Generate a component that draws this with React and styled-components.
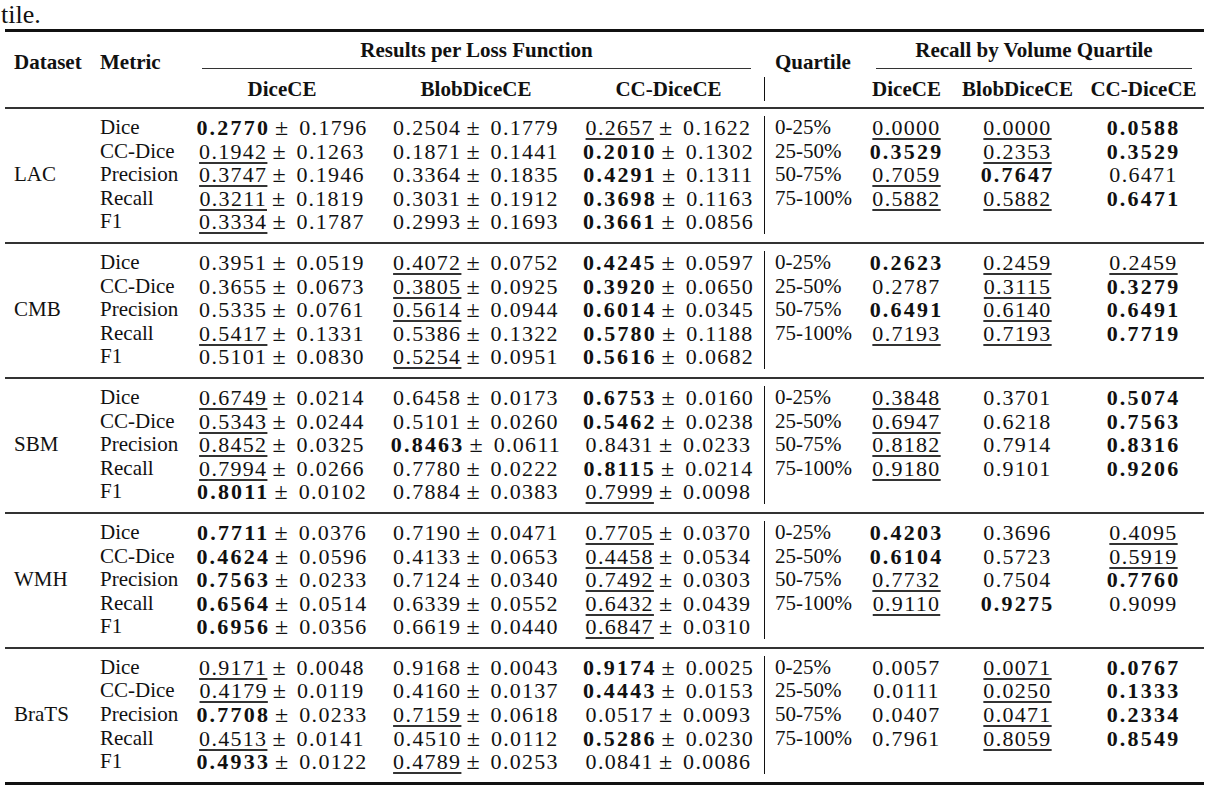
import React from "react";
import styled, { createGlobalStyle, css } from "styled-components";

const GlobalStyle = createGlobalStyle`
  html, body {
    margin: 0;
    padding: 0;
    background: #ffffff;
  }
  body {
    font-family: "Liberation Serif", "Times New Roman", serif;
    color: #111;
  }
`;

const COLS = "86px 94px 194px 194px 192px 96px 91px 131px 121px";

const DATA = [
  {
    name: "LAC",
    rows: [
      ["Dice", "b0.2770 0.1796", "0.2504 0.1779", "u0.2657 0.1622", "0-25%", "u0.0000", "u0.0000", "b0.0588"],
      ["CC-Dice", "u0.1942 0.1263", "0.1871 0.1441", "b0.2010 0.1302", "25-50%", "b0.3529", "u0.2353", "b0.3529"],
      ["Precision", "u0.3747 0.1946", "0.3364 0.1835", "b0.4291 0.1311", "50-75%", "u0.7059", "b0.7647", "0.6471"],
      ["Recall", "u0.3211 0.1819", "0.3031 0.1912", "b0.3698 0.1163", "75-100%", "u0.5882", "u0.5882", "b0.6471"],
      ["F1", "u0.3334 0.1787", "0.2993 0.1693", "b0.3661 0.0856", "", "", "", ""],
    ],
  },
  {
    name: "CMB",
    rows: [
      ["Dice", "0.3951 0.0519", "u0.4072 0.0752", "b0.4245 0.0597", "0-25%", "b0.2623", "u0.2459", "u0.2459"],
      ["CC-Dice", "0.3655 0.0673", "u0.3805 0.0925", "b0.3920 0.0650", "25-50%", "0.2787", "u0.3115", "b0.3279"],
      ["Precision", "0.5335 0.0761", "u0.5614 0.0944", "b0.6014 0.0345", "50-75%", "b0.6491", "u0.6140", "b0.6491"],
      ["Recall", "u0.5417 0.1331", "0.5386 0.1322", "b0.5780 0.1188", "75-100%", "u0.7193", "u0.7193", "b0.7719"],
      ["F1", "0.5101 0.0830", "u0.5254 0.0951", "b0.5616 0.0682", "", "", "", ""],
    ],
  },
  {
    name: "SBM",
    rows: [
      ["Dice", "u0.6749 0.0214", "0.6458 0.0173", "b0.6753 0.0160", "0-25%", "u0.3848", "0.3701", "b0.5074"],
      ["CC-Dice", "u0.5343 0.0244", "0.5101 0.0260", "b0.5462 0.0238", "25-50%", "u0.6947", "0.6218", "b0.7563"],
      ["Precision", "u0.8452 0.0325", "b0.8463 0.0611", "0.8431 0.0233", "50-75%", "u0.8182", "0.7914", "b0.8316"],
      ["Recall", "u0.7994 0.0266", "0.7780 0.0222", "b0.8115 0.0214", "75-100%", "u0.9180", "0.9101", "b0.9206"],
      ["F1", "b0.8011 0.0102", "0.7884 0.0383", "u0.7999 0.0098", "", "", "", ""],
    ],
  },
  {
    name: "WMH",
    rows: [
      ["Dice", "b0.7711 0.0376", "0.7190 0.0471", "u0.7705 0.0370", "0-25%", "b0.4203", "0.3696", "u0.4095"],
      ["CC-Dice", "b0.4624 0.0596", "0.4133 0.0653", "u0.4458 0.0534", "25-50%", "b0.6104", "0.5723", "u0.5919"],
      ["Precision", "b0.7563 0.0233", "0.7124 0.0340", "u0.7492 0.0303", "50-75%", "u0.7732", "0.7504", "b0.7760"],
      ["Recall", "b0.6564 0.0514", "0.6339 0.0552", "u0.6432 0.0439", "75-100%", "u0.9110", "b0.9275", "0.9099"],
      ["F1", "b0.6956 0.0356", "0.6619 0.0440", "u0.6847 0.0310", "", "", "", ""],
    ],
  },
  {
    name: "BraTS",
    rows: [
      ["Dice", "u0.9171 0.0048", "0.9168 0.0043", "b0.9174 0.0025", "0-25%", "0.0057", "u0.0071", "b0.0767"],
      ["CC-Dice", "u0.4179 0.0119", "0.4160 0.0137", "b0.4443 0.0153", "25-50%", "0.0111", "u0.0250", "b0.1333"],
      ["Precision", "b0.7708 0.0233", "u0.7159 0.0618", "0.0517 0.0093", "50-75%", "0.0407", "u0.0471", "b0.2334"],
      ["Recall", "u0.4513 0.0141", "0.4510 0.0112", "b0.5286 0.0230", "75-100%", "0.7961", "u0.8059", "b0.8549"],
      ["F1", "b0.4933 0.0122", "u0.4789 0.0253", "0.0841 0.0086", "", "", "", ""],
    ],
  },
];

// "b0.1234" -> bold, "u0.1234" -> underlined
const parse = (s) => {
  const flag = s[0];
  if (flag === "b" || flag === "u") {
    return { text: s.slice(1), bold: flag === "b", under: flag === "u" };
  }
  return { text: s, bold: false, under: false };
};

const App = () => {
  return (
    <>
      <GlobalStyle />
      <Page>
        <Caption>tile.</Caption>
        <Table>
          <Head>
            <StubHead>Dataset</StubHead>
            <StubHead>Metric</StubHead>
            <GroupHead $col="3 / span 3" $inset="0 14px 0 17px">
              Results per Loss Function
            </GroupHead>
            <StubHead $pad="10px">Quartile</StubHead>
            <GroupHead $col="7 / span 3" $inset="0 12px 0 15px">
              Recall by Volume Quartile
            </GroupHead>
            <SubHead $col={3}>DiceCE</SubHead>
            <SubHead $col={4}>BlobDiceCE</SubHead>
            <SubHead $col={5} $bar>
              CC-DiceCE
            </SubHead>
            <SubHead $col={7}>DiceCE</SubHead>
            <SubHead $col={8}>BlobDiceCE</SubHead>
            <SubHead $col={9}>CC-DiceCE</SubHead>
          </Head>

          {DATA.map((block) => (
            <Block key={block.name}>
              <DatasetCell>{block.name}</DatasetCell>
              {block.rows.map((row) => (
                <React.Fragment key={row[0]}>
                  <MetricCell>{row[0]}</MetricCell>
                  <Value v={row[1]} />
                  <Value v={row[2]} />
                  <Value v={row[3]} bar />
                  <QuartCell>{row[4]}</QuartCell>
                  <Recall v={row[5]} />
                  <Recall v={row[6]} />
                  <Recall v={row[7]} />
                </React.Fragment>
              ))}
            </Block>
          ))}
        </Table>
      </Page>
    </>
  );
};

const Value = ({ v, bar }) => {
  const [m, s] = v.split(" ");
  const mean = parse(m);
  return (
    <ValueCell $bar={bar}>
      <Num $bold={mean.bold} $under={mean.under}>
        {mean.text}
      </Num>
      <Pm>±</Pm>
      <Num>{s}</Num>
    </ValueCell>
  );
};

const Recall = ({ v }) => {
  if (!v) return <RecallCell />;
  const r = parse(v);
  return (
    <RecallCell>
      <Num $bold={r.bold} $under={r.under}>
        {r.text}
      </Num>
    </RecallCell>
  );
};

export default App;

const Page = styled.div`
  width: 1210px;
  min-height: 809px;
  background: #fff;
`;

const Caption = styled.div`
  font-size: 26px;
  line-height: 29px;
  height: 29px;
  padding-left: 1px;
  color: #111;
`;

const Table = styled.div`
  width: 1199px;
  margin-left: 5px;
  border-top: 3px solid #111;
  border-bottom: 3px solid #111;
`;

const Head = styled.div`
  display: grid;
  grid-template-columns: ${COLS};
  grid-template-rows: 37px 38px;
  border-bottom: 2px solid #333;
  font-weight: 700;
  font-size: 21px;
  line-height: 24px;
  white-space: nowrap;
`;

const StubHead = styled.div`
  grid-row: 1 / span 2;
  align-self: start;
  padding-top: 18px;
  padding-left: ${(p) => p.$pad || "9px"};
`;

const GroupHead = styled.div`
  grid-row: 1;
  grid-column: ${(p) => p.$col};
  margin: ${(p) => p.$inset};
  padding-top: 6px;
  text-align: center;
  border-bottom: 1px solid #333;
`;

const SubHead = styled.div`
  grid-row: 2;
  grid-column: ${(p) => p.$col};
  align-self: start;
  margin-top: 8px;
  height: 24px;
  text-align: center;
  border-right: ${(p) => (p.$bar ? "1px solid #111" : "none")};
`;

const Block = styled.div`
  display: grid;
  grid-template-columns: ${COLS};
  grid-auto-rows: 23.6px;
  padding: 7px 0 8px;
  font-size: 21px;
  line-height: 23.6px;
  white-space: nowrap;

  & + & {
    border-top: 2px solid #333;
  }
`;

const DatasetCell = styled.div`
  grid-row: 1 / span 5;
  grid-column: 1;
  align-self: center;
  padding-left: 9px;
`;

const MetricCell = styled.div`
  grid-column: 2;
  padding-left: 9px;
`;

const ValueCell = styled.div`
  font-size: 22px;
  text-align: center;
  border-right: ${(p) => (p.$bar ? "1px solid #111" : "none")};
`;

const QuartCell = styled.div`
  padding-left: 10px;
`;

const RecallCell = styled.div`
  font-size: 22px;
  text-align: center;
`;

const Num = styled.span`
  font-family: "Liberation Serif", "Times New Roman", serif;
  font-size: 22px;
  font-weight: ${(p) => (p.$bold ? 700 : 400)};
  letter-spacing: ${(p) => (p.$bold ? "2.2px" : "1.3px")};
  ${(p) =>
    p.$under &&
    css`
      text-decoration: underline;
      text-decoration-thickness: 1.5px;
      text-underline-offset: 3px;
      text-decoration-color: #333;
    `}
`;

const Pm = styled.span`
  font-family: "Liberation Serif", "Times New Roman", serif;
  font-size: 24px;
  line-height: 0;
  margin: 0 11px 0 5px;
`;
